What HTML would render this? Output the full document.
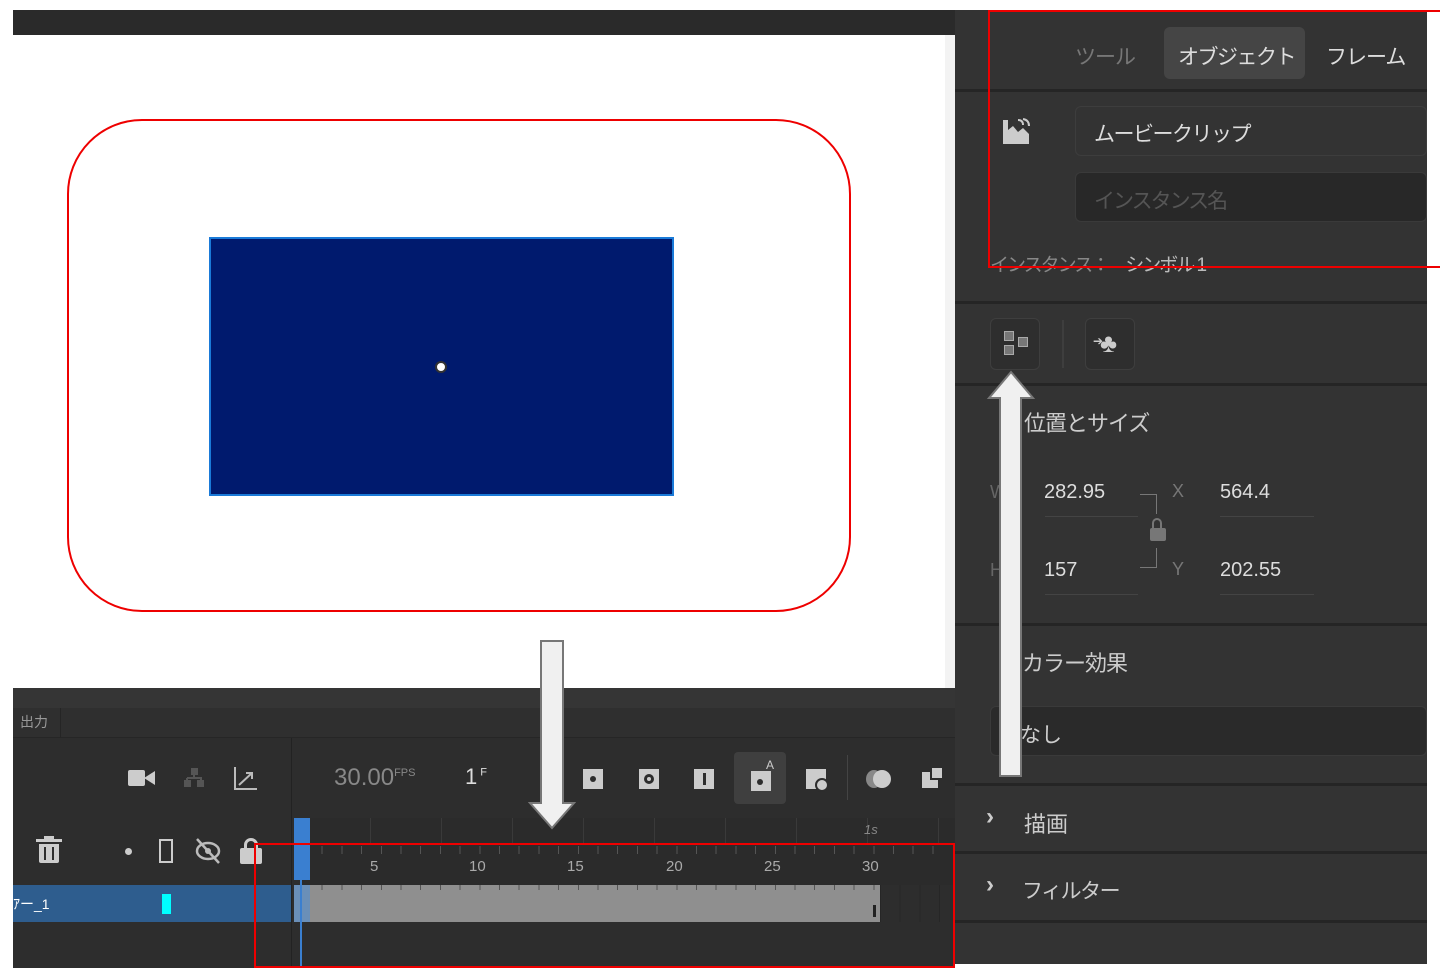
<!DOCTYPE html>
<html><head><meta charset="utf-8"><style>
*{margin:0;padding:0;box-sizing:border-box}
body{width:1440px;height:968px;background:#fff;position:relative;overflow:hidden;font-family:"Liberation Sans","Noto Sans CJK JP",sans-serif}
.a{position:absolute}
.t{color:#c8c8c8;position:absolute;white-space:nowrap}
.hl{position:absolute;left:955px;width:472px;height:3px;background:#252525}
.ic{position:absolute;width:20px;height:20px;background:#ccc}
.ic i{position:absolute;background:#2d2d2d}
</style></head><body>
<div class="a" style="left:13px;top:10px;width:942px;height:25px;background:#2a2a2a"></div>
<div class="a" style="left:13px;top:35px;width:942px;height:653px;background:#fff"></div>
<div class="a" style="left:945px;top:35px;width:10px;height:653px;background:#f3f3f3"></div>
<div class="a" style="left:67px;top:119px;width:784px;height:493px;border:2px solid #e00;border-radius:75px"></div>
<div class="a" style="left:209px;top:237px;width:465px;height:259px;background:#001a6e;border:2px solid #1a7ad8"></div>
<div class="a" style="left:435px;top:361px;width:12px;height:12px;border-radius:50%;background:#fff;border:2px solid #333"></div>

<!-- timeline -->
<div class="a" style="left:13px;top:688px;width:942px;height:280px;background:#2d2d2d"></div>
<div class="a" style="left:13px;top:688px;width:942px;height:20px;background:#353535"></div>
<div class="a" style="left:13px;top:708px;width:942px;height:30px;background:#2f2f2f;border-bottom:1px solid #262626"></div>
<div class="a" style="left:60px;top:708px;width:1px;height:30px;background:#252525"></div>
<div class="t" style="left:20px;top:712px;font-size:14px;color:#999">出力</div>
<div class="a" style="left:291px;top:738px;width:1px;height:230px;background:#222"></div>
<!-- camera -->
<div class="a" style="left:128px;top:770px;width:17px;height:16px;background:#ccc;border-radius:2px"></div>
<svg class="a" style="left:144px;top:770px" width="12" height="16"><path d="M0 8L11 1V15Z" fill="#ccc"/></svg>
<svg class="a" style="left:181px;top:766px" width="26" height="24"><rect x="10" y="2" width="7" height="7" fill="#555"/><rect x="3" y="14" width="7" height="7" fill="#555"/><rect x="16" y="14" width="7" height="7" fill="#555"/><path d="M13 9V12M6 12H20V14M6 12V14" stroke="#555" stroke-width="2" fill="none"/></svg>
<svg class="a" style="left:232px;top:765px" width="26" height="26"><path d="M3 2V24H25M7 20L20 8M14 8H20V14" stroke="#bbb" stroke-width="2" fill="none"/></svg>
<div class="t" style="left:334px;top:764px;font-size:24px;color:#888">30.00<sup style="font-size:11px">FPS</sup></div>
<div class="t" style="left:465px;top:764px;font-size:22px;color:#ddd">1<sup style="font-size:11px"> F</sup></div>
<div class="ic" style="left:583px;top:769px"><i style="left:7px;top:7px;width:6px;height:6px;border-radius:50%"></i></div>
<div class="ic" style="left:639px;top:769px"><i style="left:5px;top:5px;width:10px;height:10px;border-radius:50%"></i><i style="left:8px;top:8px;width:4px;height:4px;border-radius:50%;background:#ccc"></i></div>
<div class="ic" style="left:694px;top:769px"><i style="left:9px;top:4px;width:3px;height:12px"></i></div>
<div class="a" style="left:734px;top:752px;width:52px;height:52px;background:#3f3f3f;border-radius:4px"></div>
<div class="ic" style="left:751px;top:771px"><i style="left:6px;top:8px;width:6px;height:6px;border-radius:50%"></i></div>
<div class="t" style="left:766px;top:758px;font-size:12px;color:#ccc">A</div>
<div class="ic" style="left:806px;top:769px"></div>
<div class="a" style="left:815px;top:778px;width:14px;height:14px;background:#ccc;border-radius:50%;border:2px solid #2d2d2d"></div>
<div class="a" style="left:847px;top:755px;width:1px;height:45px;background:#444"></div>
<div class="a" style="left:866px;top:770px;width:16px;height:18px;border-radius:50%;background:#888"></div>
<div class="a" style="left:873px;top:770px;width:18px;height:18px;border-radius:50%;background:#ccc"></div>
<div class="ic" style="left:922px;top:772px;width:16px;height:16px"></div>
<div class="ic" style="left:930px;top:766px;width:14px;height:14px;border:2px solid #2d2d2d"></div>
<!-- trash -->
<div class="a" style="left:36px;top:839px;width:26px;height:3px;background:#ccc"></div>
<div class="a" style="left:44px;top:836px;width:10px;height:3px;background:#ccc"></div>
<div class="a" style="left:39px;top:844px;width:20px;height:19px;background:#ccc;border-radius:0 0 2px 2px"></div>
<div class="a" style="left:44px;top:847px;width:2px;height:13px;background:#2d2d2d"></div>
<div class="a" style="left:52px;top:847px;width:2px;height:13px;background:#2d2d2d"></div>
<div class="a" style="left:125px;top:848px;width:7px;height:7px;border-radius:50%;background:#ccc"></div>
<div class="a" style="left:159px;top:839px;width:14px;height:24px;border:2px solid #ccc"></div>
<svg class="a" style="left:193px;top:837px" width="30" height="28"><ellipse cx="15" cy="14" rx="11" ry="8" stroke="#bbb" stroke-width="2.5" fill="none"/><circle cx="15" cy="14" r="3" fill="#bbb"/><path d="M4 2L26 26" stroke="#bbb" stroke-width="2.5"/></svg>
<div class="a" style="left:244px;top:838px;width:14px;height:14px;border:3px solid #ccc;border-radius:7px 7px 0 0;border-bottom:none"></div>
<div class="a" style="left:240px;top:848px;width:22px;height:16px;background:#ccc;border-radius:2px"></div>
<div class="a" style="left:13px;top:885px;width:278px;height:37px;background:#2e5d8e"></div>
<div class="t" style="left:13px;top:894px;font-size:14px;color:#fff">ｱー_1</div>
<div class="a" style="left:162px;top:894px;width:9px;height:20px;background:#0ff"></div>
<!-- ruler -->
<div class="a" style="left:300px;top:818px;width:655px;height:67px;background:#2b2b2b"></div>
<div class="a" style="left:300px;top:818px;width:655px;height:26px;background:repeating-linear-gradient(90deg,transparent 0,transparent 70px,#3a3a3a 70px,#3a3a3a 71px)"></div>
<div class="a" style="left:302px;top:846px;width:640px;height:8px;background:repeating-linear-gradient(90deg,#555 0,#555 1px,transparent 1px,transparent 19.7px)"></div>
<div class="t" style="left:370px;top:858px;font-size:15px;color:#aaa">5</div>
<div class="t" style="left:469px;top:858px;font-size:15px;color:#aaa">10</div>
<div class="t" style="left:567px;top:858px;font-size:15px;color:#aaa">15</div>
<div class="t" style="left:666px;top:858px;font-size:15px;color:#aaa">20</div>
<div class="t" style="left:764px;top:858px;font-size:15px;color:#aaa">25</div>
<div class="t" style="left:862px;top:858px;font-size:15px;color:#aaa">30</div>
<div class="t" style="left:864px;top:822px;font-size:13px;color:#888;font-style:italic">1s</div>
<div class="a" style="left:300px;top:885px;width:580px;height:37px;background:#8f8f8f"></div>
<div class="a" style="left:302px;top:885px;width:578px;height:5px;background:repeating-linear-gradient(90deg,#555 0,#555 1px,transparent 1px,transparent 19.7px)"></div>
<div class="a" style="left:880px;top:885px;width:65px;height:37px;background:repeating-linear-gradient(90deg,#262626 0,#262626 1px,transparent 1px,transparent 19.7px)"></div>
<div class="a" style="left:294px;top:818px;width:16px;height:62px;background:#3a7fd0"></div>
<div class="a" style="left:294px;top:885px;width:16px;height:37px;background:#6a8fb8"></div>
<div class="a" style="left:300px;top:880px;width:2px;height:88px;background:#3a7fd0"></div>
<div class="a" style="left:873px;top:905px;width:3px;height:12px;background:#222"></div>
<div class="a" style="left:254px;top:843px;width:701px;height:125px;border:2px solid #e00"></div>

<!-- down arrow -->
<svg class="a" style="left:528px;top:638px" width="48" height="194"><path d="M13 3H35V165H46L24 190L2 165H13Z" fill="#f0f0f0" stroke="#777" stroke-width="2"/></svg>

<!-- right panel -->
<div class="a" style="left:955px;top:10px;width:472px;height:954px;background:#333"></div>
<div class="t" style="left:1075px;top:41px;font-size:21px;color:#777;letter-spacing:-1px">ツール</div>
<div class="a" style="left:1164px;top:27px;width:141px;height:52px;background:#454545;border-radius:6px"></div>
<div class="t" style="left:1178px;top:41px;font-size:21px;color:#ddd;letter-spacing:-1.5px">オブジェクト</div>
<div class="t" style="left:1326px;top:41px;font-size:21px;color:#ddd;letter-spacing:-1px">フレーム</div>
<div class="hl" style="top:89px"></div>
<svg class="a" style="left:1001px;top:116px" width="30" height="30"><path d="M2 28V4H7V14L12 10L17 16L22 12L28 18V28Z" fill="#ccc"/><path d="M17 4Q22 4 22 9M22 3Q28 4 28 10" stroke="#ccc" stroke-width="2" fill="none"/></svg>
<div class="a" style="left:1075px;top:106px;width:352px;height:50px;background:#333;border:1px solid #3d3d3d;border-radius:6px"></div>
<div class="t" style="left:1094px;top:118px;font-size:21px;color:#ddd;letter-spacing:-1.5px">ムービークリップ</div>
<div class="a" style="left:1075px;top:172px;width:352px;height:50px;background:#282828;border:1px solid #3a3a3a;border-radius:6px"></div>
<div class="t" style="left:1094px;top:185px;font-size:21px;color:#555;letter-spacing:-2px">インスタンス名</div>
<div class="t" style="left:990px;top:250px;font-size:19px;color:#888;letter-spacing:-2px">インスタンス：　<span style="color:#bbb">シンボル 1</span></div>
<div class="a" style="left:988px;top:10px;width:452px;height:258px;border:2px solid #e00;border-right:none"></div>
<div class="hl" style="top:301px"></div>
<div class="a" style="left:990px;top:318px;width:50px;height:52px;border:1px solid #3e3e3e;border-radius:6px;background:#2e2e2e"></div>
<div class="a" style="left:1004px;top:331px;width:10px;height:10px;background:#777;border:1px solid #aaa"></div>
<div class="a" style="left:1018px;top:337px;width:10px;height:10px;background:#777;border:1px solid #aaa"></div>
<div class="a" style="left:1004px;top:345px;width:10px;height:10px;background:#777;border:1px solid #aaa"></div>
<div class="a" style="left:1062px;top:320px;width:2px;height:48px;background:#3e3e3e"></div>
<div class="a" style="left:1085px;top:318px;width:50px;height:52px;border:1px solid #3e3e3e;border-radius:6px;background:#2e2e2e"></div>
<div class="t" style="left:1100px;top:328px;font-size:26px;color:#ccc">♣</div>
<div class="t" style="left:1093px;top:334px;font-size:12px;color:#ccc">➔</div>
<div class="hl" style="top:383px"></div>
<div class="t" style="left:1024px;top:406px;font-size:22px;color:#ccc;letter-spacing:-1px">位置とサイズ</div>
<div class="t" style="left:990px;top:482px;font-size:18px;color:#666">W</div>
<div class="t" style="left:1044px;top:481px;font-size:20px;color:#ddd">282.95</div>
<div class="a" style="left:1045px;top:516px;width:93px;height:1px;background:#444"></div>
<div class="t" style="left:1172px;top:481px;font-size:18px;color:#777">X</div>
<div class="t" style="left:1220px;top:481px;font-size:20px;color:#ddd">564.4</div>
<div class="a" style="left:1220px;top:516px;width:94px;height:1px;background:#444"></div>
<div class="t" style="left:990px;top:560px;font-size:18px;color:#666">H</div>
<div class="t" style="left:1044px;top:559px;font-size:20px;color:#ddd">157</div>
<div class="a" style="left:1045px;top:594px;width:93px;height:1px;background:#444"></div>
<div class="t" style="left:1172px;top:559px;font-size:18px;color:#777">Y</div>
<div class="t" style="left:1220px;top:559px;font-size:20px;color:#ddd">202.55</div>
<div class="a" style="left:1220px;top:594px;width:94px;height:1px;background:#444"></div>
<div class="a" style="left:1140px;top:494px;width:17px;height:20px;border-top:1px solid #777;border-right:1px solid #777"></div>
<div class="a" style="left:1140px;top:548px;width:17px;height:20px;border-bottom:1px solid #777;border-right:1px solid #777"></div>
<div class="a" style="left:1152px;top:518px;width:10px;height:12px;border:2px solid #777;border-radius:5px 5px 0 0;border-bottom:none"></div>
<div class="a" style="left:1150px;top:528px;width:16px;height:13px;background:#777;border-radius:2px"></div>
<div class="hl" style="top:623px"></div>
<div class="t" style="left:1022px;top:646px;font-size:22px;color:#ccc;letter-spacing:-1px">カラー効果</div>
<div class="a" style="left:990px;top:706px;width:437px;height:50px;background:#2a2a2a;border:1px solid #3a3a3a;border-radius:6px"></div>
<div class="t" style="left:1020px;top:719px;font-size:21px;color:#ccc">なし</div>
<div class="hl" style="top:783px"></div>
<div class="t" style="left:986px;top:803px;font-size:24px;color:#ccc;font-weight:bold">›</div>
<div class="t" style="left:1024px;top:807px;font-size:22px;color:#ccc">描画</div>
<div class="hl" style="top:851px"></div>
<div class="t" style="left:986px;top:871px;font-size:24px;color:#ccc;font-weight:bold">›</div>
<div class="t" style="left:1022px;top:875px;font-size:21px;color:#ccc;letter-spacing:-1.5px">フィルター</div>
<div class="hl" style="top:920px"></div>
<!-- up arrow -->
<svg class="a" style="left:986px;top:368px" width="50" height="412"><path d="M14 408V30H3L25 4L47 30H35V408Z" fill="#f0f0f0" stroke="#777" stroke-width="2"/></svg>
</body></html>
